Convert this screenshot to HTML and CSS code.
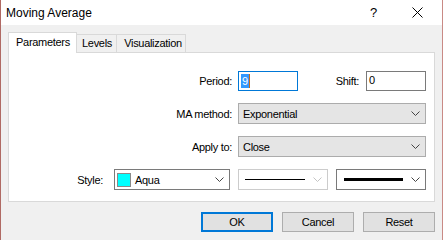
FILE: index.html
```html
<!DOCTYPE html>
<html>
<head>
    <title>Moving Average</title>
    <link rel="stylesheet" href="styles.css">
</head>
<body>
    <div class="window">
        <!-- Title bar -->
        <div class="titlebar">
            <span class="title">Moving Average</span>
            <span class="help">?</span>
            <span class="close">
                <svg width="11" height="11" viewBox="0 0 11 11"><path d="M0.5 0.5 L10.5 10.5 M10.5 0.5 L0.5 10.5" stroke="#000" stroke-width="1" fill="none"/></svg>
            </span>
        </div>

        <div class="dialog">
            <!-- Tabs -->
            <div class="tabs">
                <div class="tab active">Parameters</div>
                <div class="tab levels">Levels</div>
                <div class="tab visual">Visualization</div>
            </div>

            <!-- Parameters page -->
            <div class="panel">
                <div class="row">
                    <span class="label">Period:</span>
                    <div class="pair">
                        <div class="edit focused"><span class="selected">9</span><span class="caret"></span></div>
                        <span class="label shift">Shift:</span>
                        <div class="edit">0</div>
                    </div>
                </div>
                <div class="row">
                    <span class="label">MA method:</span>
                    <div class="combo wide">
                        <span class="value">Exponential</span>
                        <svg class="chevron" width="9" height="5" viewBox="0 0 9 5"><path d="M0.5 0.5 L4.5 4.5 L8.5 0.5" stroke="#444" fill="none"/></svg>
                    </div>
                </div>
                <div class="row">
                    <span class="label">Apply to:</span>
                    <div class="combo wide">
                        <span class="value">Close</span>
                        <svg class="chevron" width="9" height="5" viewBox="0 0 9 5"><path d="M0.5 0.5 L4.5 4.5 L8.5 0.5" stroke="#444" fill="none"/></svg>
                    </div>
                </div>
                <div class="row">
                    <span class="label">Style:</span>
                    <div class="list color">
                        <span class="swatch"></span>
                        <span class="value">Aqua</span>
                        <svg class="chevron" width="9" height="5" viewBox="0 0 9 5"><path d="M0.5 0.5 L4.5 4.5 L8.5 0.5" stroke="#444" fill="none"/></svg>
                    </div>
                    <div class="list linestyle disabled">
                        <span class="line thin"></span>
                        <svg class="chevron" width="9" height="5" viewBox="0 0 9 5"><path d="M0.5 0.5 L4.5 4.5 L8.5 0.5" stroke="#c4c4c4" fill="none"/></svg>
                    </div>
                    <div class="list linewidth">
                        <span class="line thick"></span>
                        <svg class="chevron" width="9" height="5" viewBox="0 0 9 5"><path d="M0.5 0.5 L4.5 4.5 L8.5 0.5" stroke="#444" fill="none"/></svg>
                    </div>
                </div>
            </div>

            <!-- Dialog buttons -->
            <div class="buttons">
                <button class="btn default">OK</button>
                <button class="btn">Cancel</button>
                <button class="btn">Reset</button>
            </div>
        </div>
    </div>
</body>
</html>
```

FILE: styles.css
```css
/* Windows style indicator dialog */
body {
    margin: 0;
    font-family: "Liberation Sans", Arial, sans-serif;
    font-size: 11px;
    letter-spacing: -0.3px;
    color: #000;
}

.window {
    width: 441px;
    height: 240px;
    border-left: 1px solid #b06a64;
    border-right: 1px solid #c98a85;
    background: #f0f0f0;
    overflow: hidden;
}

/* Title bar */
.titlebar {
    height: 25px;
    background: #fff;
    display: flex;
    align-items: center;
    font-size: 12px;
    letter-spacing: 0;
}
.title {
    margin-left: 5px;
    flex: 1;
}
.help {
    width: 10px;
    margin-right: 32px;
    font-size: 13px;
}
.close {
    width: 11px;
    height: 11px;
    margin-right: 19px;
    display: flex;
}

/* Tabs */
.dialog {
    padding: 7px 7px 0 7px;
}
.tabs {
    display: flex;
    align-items: flex-end;
    height: 20px;
}
.tab {
    line-height: 17px;
    border: 1px solid #d9d9d9;
    border-bottom: none;
    background: #f0f0f0;
    box-sizing: border-box;
    height: 18px;
    text-align: center;
}
.tab.active {
    height: 21px;
    width: 69px;
    background: #fff;
    line-height: 19px;
    margin-bottom: -1px;
    position: relative;
    z-index: 1;
    padding-left: 1px;
}
.tab.levels {
    width: 40px;
    border-left: none;
    padding-left: 1px;
}
.tab.visual {
    width: 69px;
    border-left: none;
    padding-left: 4px;
}

/* Page */
.panel {
    background: #fff;
    border: 1px solid #d9d9d9;
    box-sizing: border-box;
    height: 150px;
    padding: 17px 8px 0 0;
    display: flex;
    flex-direction: column;
    gap: 12px;
}
.row {
    display: flex;
    justify-content: flex-end;
    align-items: center;
    height: 21px;
}
.label {
    margin-right: 6px;
}
.pair {
    width: 188px;
    display: flex;
    align-items: center;
}
.label.shift {
    margin-left: auto;
    margin-right: 7px;
}

.edit {
    width: 60px;
    height: 20px;
    box-sizing: border-box;
    border: 1px solid #7a7a7a;
    background: #fff;
    padding: 2px 0 0 2px;
    display: flex;
    align-items: flex-start;
}
.edit.focused {
    border-color: #0078d7;
}
.selected {
    background: #3399ff;
    color: #fff;
    height: 14px;
    line-height: 14px;
    padding: 0 1px;
}
.caret {
    width: 1px;
    height: 14px;
    background: #c46a1a;
}

.combo,
.list {
    height: 21px;
    box-sizing: border-box;
    display: flex;
    align-items: center;
    position: relative;
}
.combo {
    background: #e5e5e5;
    border: 1px solid #acacac;
    padding-left: 4px;
}
.combo.wide {
    width: 188px;
}
.list {
    background: #fff;
    border: 1px solid #7a7a7a;
}
.list.disabled {
    border-color: #cccccc;
}
.chevron {
    position: absolute;
    right: 5px;
    top: 7px;
}

.list.color {
    width: 116px;
    margin-right: 8px;
    margin-left: 5px;
    padding-left: 2px;
}
.swatch {
    width: 12px;
    height: 12px;
    background: #00ffff;
    border: 1px solid #8a8a8a;
    margin-right: 4px;
}
.list.linestyle {
    width: 90px;
    margin-right: 8px;
    padding-left: 6px;
}
.list.linewidth {
    width: 90px;
    padding-left: 7px;
}
.line {
    display: block;
    background: #000;
}
.line.thin {
    width: 60px;
    height: 1px;
}
.line.thick {
    width: 59px;
    height: 3px;
}

/* Buttons */
.buttons {
    display: flex;
    justify-content: flex-end;
    gap: 9px;
    margin-top: 10px;
}
.btn {
    width: 72px;
    height: 20px;
    background: #e1e1e1;
    border: 1px solid #adadad;
    font-family: "Liberation Sans", Arial, sans-serif;
    font-size: 11px;
    letter-spacing: -0.3px;
    color: #000;
    padding: 0;
}
.btn.default {
    border: 2px solid #0078d7;
}
```
